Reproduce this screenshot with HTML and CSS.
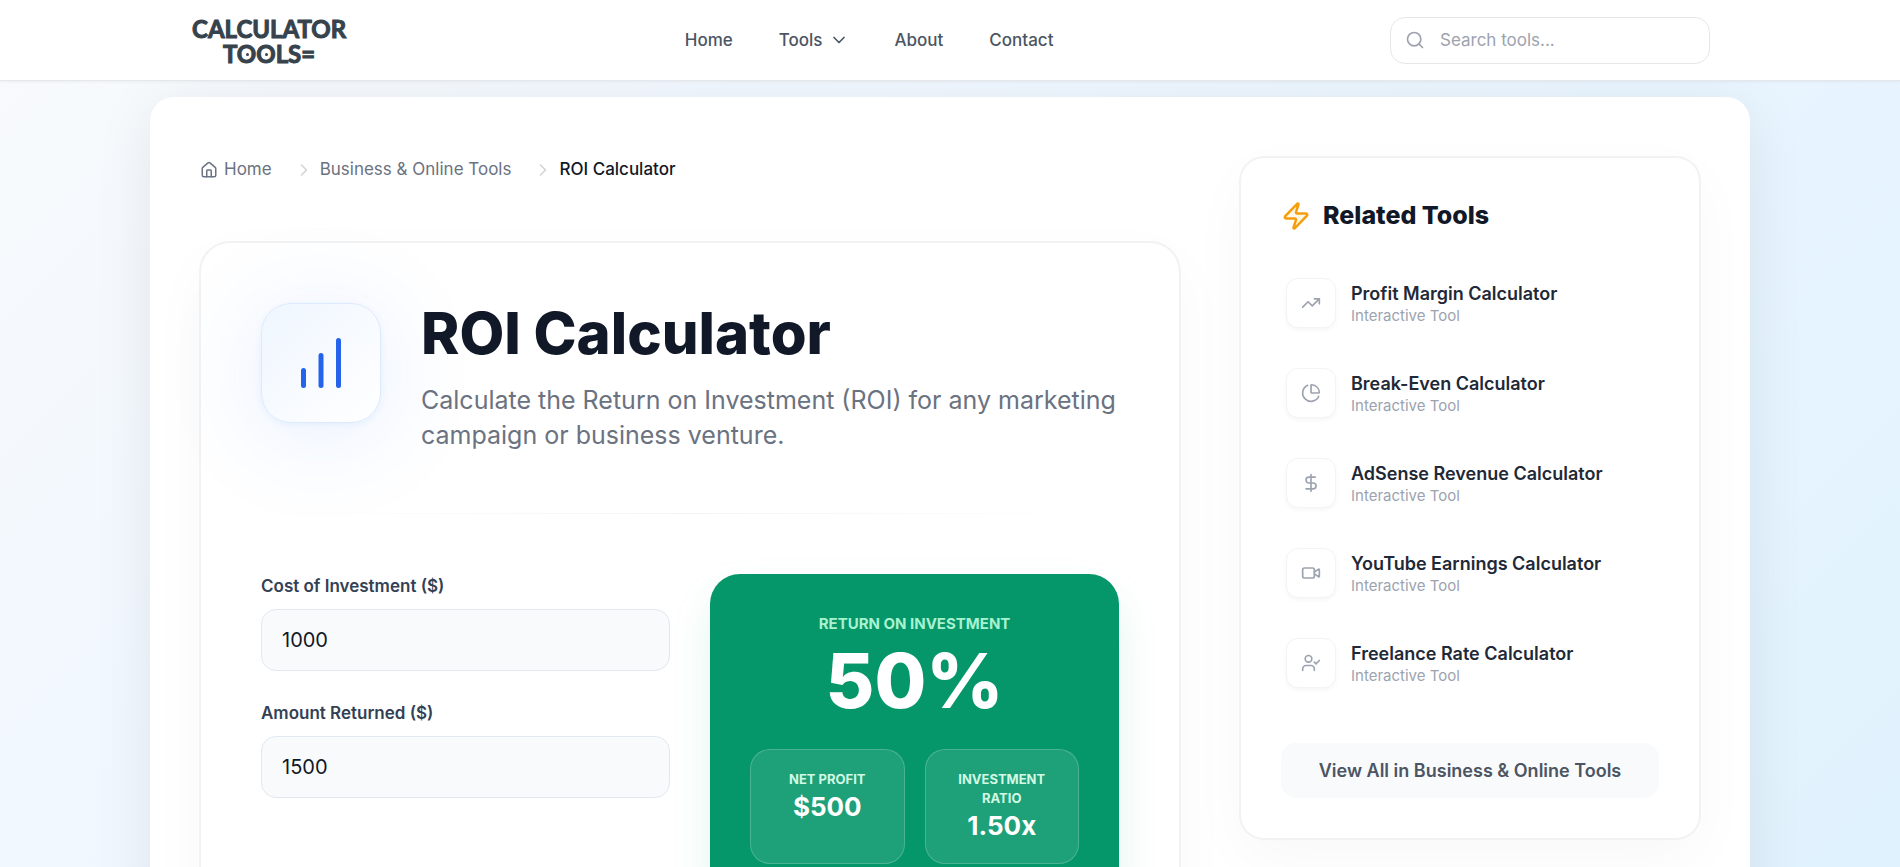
FILE: index.html
```html
<!DOCTYPE html>
<html lang="en">
<head>
<meta charset="utf-8">
<meta name="viewport" content="width=device-width, initial-scale=1">
<title>ROI Calculator</title>
<link rel="stylesheet" href="styles.css">
</head>
<body>
<header class="topbar">
  <div class="topbar-inner">
    <a class="logo" href="#" aria-label="Calculator Tools">
      <span class="logo-line">CALCULATOR</span>
      <span class="logo-line">T<span class="dial">O</span><span class="dial">O</span>LS=</span>
    </a>
    <nav class="nav" aria-label="Main">
      <a href="#">Home</a>
      <a href="#">Tools <svg class="icon" width="20" height="20" viewBox="0 0 24 24"><path d="m6 9 6 6 6-6"/></svg></a>
      <a href="#">About</a>
      <a href="#">Contact</a>
    </nav>
    <form class="search" role="search">
      <svg class="icon" width="20" height="20" viewBox="0 0 24 24"><circle cx="11" cy="11" r="8"/><path d="m21 21-4.300-4.300"/></svg>
      <input type="search" placeholder="Search tools..." aria-label="Search tools">
    </form>
  </div>
</header>

<div class="page">
  <main class="main">
    <nav aria-label="Breadcrumb">
      <ol class="crumbs">
        <li><a href="#"><svg class="icon" width="18" height="18" viewBox="0 0 24 24"><path d="M15 21v-8a1 1 0 0 0-1-1h-4a1 1 0 0 0-1 1v8"/><path d="M3 10a2 2 0 0 1 .709-1.528l7-6a2 2 0 0 1 2.582 0l7 6A2 2 0 0 1 21 10v9a2 2 0 0 1-2 2H5a2 2 0 0 1-2-2z"/></svg>Home</a></li>
        <li><svg class="icon sep" width="20" height="20" viewBox="0 0 24 24"><path d="m9 18 6-6-6-6"/></svg><a href="#">Business &amp; Online Tools</a></li>
        <li><svg class="icon sep" width="20" height="20" viewBox="0 0 24 24"><path d="m9 18 6-6-6-6"/></svg><span class="current" aria-current="page">ROI Calculator</span></li>
      </ol>
    </nav>

    <section class="card tool">
      <div class="tool-head">
        <div class="tool-icon"><svg class="icon" width="60" height="60" viewBox="0 0 24 24"><path d="M5 21v-6"/><path d="M12 21V9"/><path d="M19 21V3"/></svg></div>
        <div class="tool-intro">
          <h1>ROI Calculator</h1>
          <p>Calculate the Return on Investment (ROI) for any marketing campaign or business venture.</p>
        </div>
      </div>
      <div class="divider"></div>
      <div class="tool-body">
        <form class="fields">
          <div class="field">
            <label for="cost">Cost of Investment ($)</label>
            <input id="cost" type="text" inputmode="decimal" value="1000">
          </div>
          <div class="field">
            <label for="returned">Amount Returned ($)</label>
            <input id="returned" type="text" inputmode="decimal" value="1500">
          </div>
        </form>
        <div class="result">
          <div class="result-label">Return on Investment</div>
          <div class="result-value">50%</div>
          <div class="tiles">
            <div class="tile"><div class="tile-label">Net Profit</div><div class="tile-value">$500</div></div>
            <div class="tile"><div class="tile-label">Investment Ratio</div><div class="tile-value">1.50x</div></div>
          </div>
        </div>
      </div>
    </section>
  </main>

  <aside class="card related">
    <h2><svg class="icon" width="30" height="30" viewBox="0 0 24 24"><path d="M4 14a1 1 0 0 1-.78-1.630l9.900-10.200a.5.5 0 0 1 .86.460l-1.920 6.020A1 1 0 0 0 13 10h7a1 1 0 0 1 .78 1.630l-9.900 10.200a.5.5 0 0 1-.86-.460l1.920-6.020A1 1 0 0 0 11 14z"/></svg>Related Tools</h2>
    <ul class="related-list">
      <li><a href="#"><span class="badge"><svg class="icon" width="20" height="20" viewBox="0 0 24 24"><path d="M16 7h6v6"/><path d="m22 7-8.500 8.500-5-5L2 17"/></svg></span><span class="item-text"><span class="item-title">Profit Margin Calculator</span><span class="item-sub">Interactive Tool</span></span></a></li>
      <li><a href="#"><span class="badge"><svg class="icon" width="20" height="20" viewBox="0 0 24 24"><path d="M21 12c.552 0 1.005-.449.950-.998a10 10 0 0 0-8.953-8.951c-.550-.055-.998.398-.998.950v8a1 1 0 0 0 1 1z"/><path d="M21.210 15.890A10 10 0 1 1 8 2.830"/></svg></span><span class="item-text"><span class="item-title">Break-Even Calculator</span><span class="item-sub">Interactive Tool</span></span></a></li>
      <li><a href="#"><span class="badge"><svg class="icon" width="20" height="20" viewBox="0 0 24 24"><path d="M12 2v20"/><path d="M17 5H9.500a3.500 3.500 0 0 0 0 7h5a3.500 3.500 0 0 1 0 7H6"/></svg></span><span class="item-text"><span class="item-title">AdSense Revenue Calculator</span><span class="item-sub">Interactive Tool</span></span></a></li>
      <li><a href="#"><span class="badge"><svg class="icon" width="20" height="20" viewBox="0 0 24 24"><path d="m16 13 5.223 3.482a.5.5 0 0 0 .777-.416V7.870a.5.5 0 0 0-.752-.432L16 10.500"/><rect x="2" y="6" width="14" height="12" rx="2"/></svg></span><span class="item-text"><span class="item-title">YouTube Earnings Calculator</span><span class="item-sub">Interactive Tool</span></span></a></li>
      <li><a href="#"><span class="badge"><svg class="icon" width="20" height="20" viewBox="0 0 24 24"><path d="m16 11 2 2 4-4"/><path d="M16 21v-2a4 4 0 0 0-4-4H6a4 4 0 0 0-4 4v2"/><circle cx="9" cy="7" r="4"/></svg></span><span class="item-text"><span class="item-title">Freelance Rate Calculator</span><span class="item-sub">Interactive Tool</span></span></a></li>
    </ul>
    <a class="view-all" href="#">View All in Business &amp; Online Tools</a>
  </aside>
</div>
</body>
</html>
```
FILE: styles.css
```css
* { box-sizing: border-box; }

body {
  margin: 0;
  min-height: 100vh;
  font-family: Inter, "Liberation Sans", sans-serif;
  font-size: 17px;
  line-height: 25px;
  color: #111827;
  background: linear-gradient(135deg, #f8fafc 0%, #f0f7ff 35%, #e0f2fe 100%) fixed;
}

a { color: inherit; text-decoration: none; }
h1, h2, p, ul, ol { margin: 0; padding: 0; }
ul, ol { list-style: none; }

.icon {
  flex: none;
  fill: none;
  stroke: currentColor;
  stroke-width: 2;
  stroke-linecap: round;
  stroke-linejoin: round;
}

/* Top bar */
.topbar {
  position: relative;
  background: #fff;
  border-bottom: 1px solid #e5e7eb;
  box-shadow: 0 1px 3px rgba(0, 0, 0, 0.05);
}
.topbar-inner {
  display: flex;
  align-items: center;
  justify-content: space-between;
  max-width: 1600px;
  height: 80px;
  margin: 0 auto;
  padding: 0 40px;
}
.logo {
  display: flex;
  flex-direction: column;
  align-items: center;
  padding: 2px 2px 0;
  font-family: Lato, sans-serif;
  font-size: 24px;
  font-weight: 700;
  line-height: 25px;
  color: #36424c;
  -webkit-text-stroke: 1px #36424c;
}
.dial { position: relative; }
.dial::after {
  content: "";
  position: absolute;
  left: 50%;
  top: 50%;
  width: 3px;
  height: 3px;
  margin: -1px;
  border-radius: 50%;
  background: currentColor;
}
.nav {
  display: flex;
  gap: 46px;
  font-weight: 500;
  color: #4b5563;
}
.nav a { display: flex; align-items: center; gap: 6px; }
.search {
  display: flex;
  align-items: center;
  gap: 15px;
  width: 320px;
  height: 47px;
  padding: 0 14px;
  border: 1px solid #e5e7eb;
  border-radius: 15px;
  color: #9ca3af;
}
.search input {
  flex: 1;
  min-width: 0;
  padding: 0;
  border: 0;
  outline: 0;
  background: none;
  font: inherit;
  color: #111827;
}
.search input::placeholder { color: #9ca3af; }

/* Page shell */
.page {
  display: grid;
  grid-template-columns: minmax(0, 1fr) 460px;
  align-items: start;
  gap: 60px;
  max-width: 1600px;
  margin: 16px auto;
  padding: 60px 50px;
  border-radius: 24px;
  background: #fff;
  box-shadow: 0 10px 60px rgba(0, 0, 0, 0.08);
}
.crumbs {
  display: flex;
  gap: 22px;
  margin-bottom: 60px;
  color: #6b7280;
}
.crumbs li, .crumbs a { display: flex; align-items: center; gap: 6px; }
.sep { color: #d1d5db; }
.current { font-weight: 500; color: #111827; }

.card {
  border: 1px solid #f1f2f3;
  background: #fff;
  box-shadow: 0 0 0 1px #f1f2f3, 0 20px 60px rgba(0, 0, 0, 0.03);
}

/* Calculator */
.tool { padding: 60px; border-radius: 30px; }
.tool-head { display: flex; gap: 40px; }
.tool-icon {
  flex: none;
  display: grid;
  place-items: center;
  width: 120px;
  height: 120px;
  border: 1px solid #dbeafe;
  border-radius: 30px;
  background: linear-gradient(135deg, #eff6ff, #fff);
  box-shadow: 0 2px 6px rgba(37, 99, 235, 0.06), 0 10px 100px rgba(59, 130, 246, 0.14);
  color: #2563eb;
}
h1 {
  margin-bottom: 20px;
  font-size: 58px;
  font-weight: 800;
  line-height: 60px;
}
.tool-intro { position: relative; }
.tool-intro p { font-size: 25px; line-height: 35px; color: #6b7280; }
.divider {
  height: 1px;
  margin: 60px 0;
  background: linear-gradient(90deg, transparent, #f3f4f6, transparent);
}
.tool-body {
  display: grid;
  grid-template-columns: 1fr 1fr;
  gap: 40px;
}
.fields { display: flex; flex-direction: column; gap: 30px; }
.field { display: flex; flex-direction: column; gap: 10px; }
.field label { font-weight: 600; color: #334155; }
.field input {
  width: 100%;
  height: 62px;
  padding: 0 20px;
  border: 1px solid #e2e8f0;
  border-radius: 15px;
  background: #f8fafc;
  font: 400 20px/30px Inter, sans-serif;
  color: #111827;
}
.result {
  padding: 40px;
  border-radius: 30px;
  background: #059669;
  box-shadow: 0 20px 40px rgba(16, 185, 129, 0.12);
  color: #fff;
  text-align: center;
}
.result-label {
  margin-bottom: 10px;
  font-size: 15px;
  font-weight: 700;
  line-height: 19px;
  text-transform: uppercase;
  color: #a7f3d0;
}
.result-value {
  margin-bottom: 30px;
  font-size: 75px;
  font-weight: 800;
  line-height: 76px;
}
.tiles {
  display: grid;
  grid-template-columns: 1fr 1fr;
  gap: 20px;
}
.tile {
  padding: 20px;
  border: 1px solid rgba(255, 255, 255, 0.2);
  border-radius: 20px;
  background: rgba(255, 255, 255, 0.1);
}
.tile-label {
  font-size: 13px;
  font-weight: 700;
  line-height: 19px;
  text-transform: uppercase;
  color: #d1fae5;
}
.tile-value { font-size: 26px; font-weight: 700; line-height: 35px; }

/* Sidebar */
.related { padding: 40px; border-radius: 24px; }
h2 {
  display: flex;
  align-items: center;
  gap: 12px;
  margin-bottom: 30px;
  font-size: 25px;
  font-weight: 800;
  line-height: 35px;
}
h2 .icon { color: #f59e0b; fill: #fef7e8; }
.related-list { display: flex; flex-direction: column; gap: 10px; }
.related-list a {
  display: flex;
  align-items: center;
  gap: 15px;
  padding: 15px 5px;
}
.badge {
  flex: none;
  display: grid;
  place-items: center;
  width: 50px;
  height: 50px;
  border: 1px solid #f3f4f6;
  border-radius: 12px;
  background: #fff;
  box-shadow: 0 2px 4px rgba(0, 0, 0, 0.04);
  color: #9ca3af;
}
.item-text { display: flex; flex-direction: column; }
.item-title { font-size: 18px; font-weight: 600; line-height: 25px; color: #1f2937; }
.item-sub { font-size: 15px; line-height: 20px; color: #9ca3af; }
.view-all {
  display: block;
  margin-top: 40px;
  padding: 15px;
  border-radius: 15px;
  background: #f9fafb;
  font-size: 18px;
  font-weight: 600;
  text-align: center;
  color: #4b5563;
}
```
